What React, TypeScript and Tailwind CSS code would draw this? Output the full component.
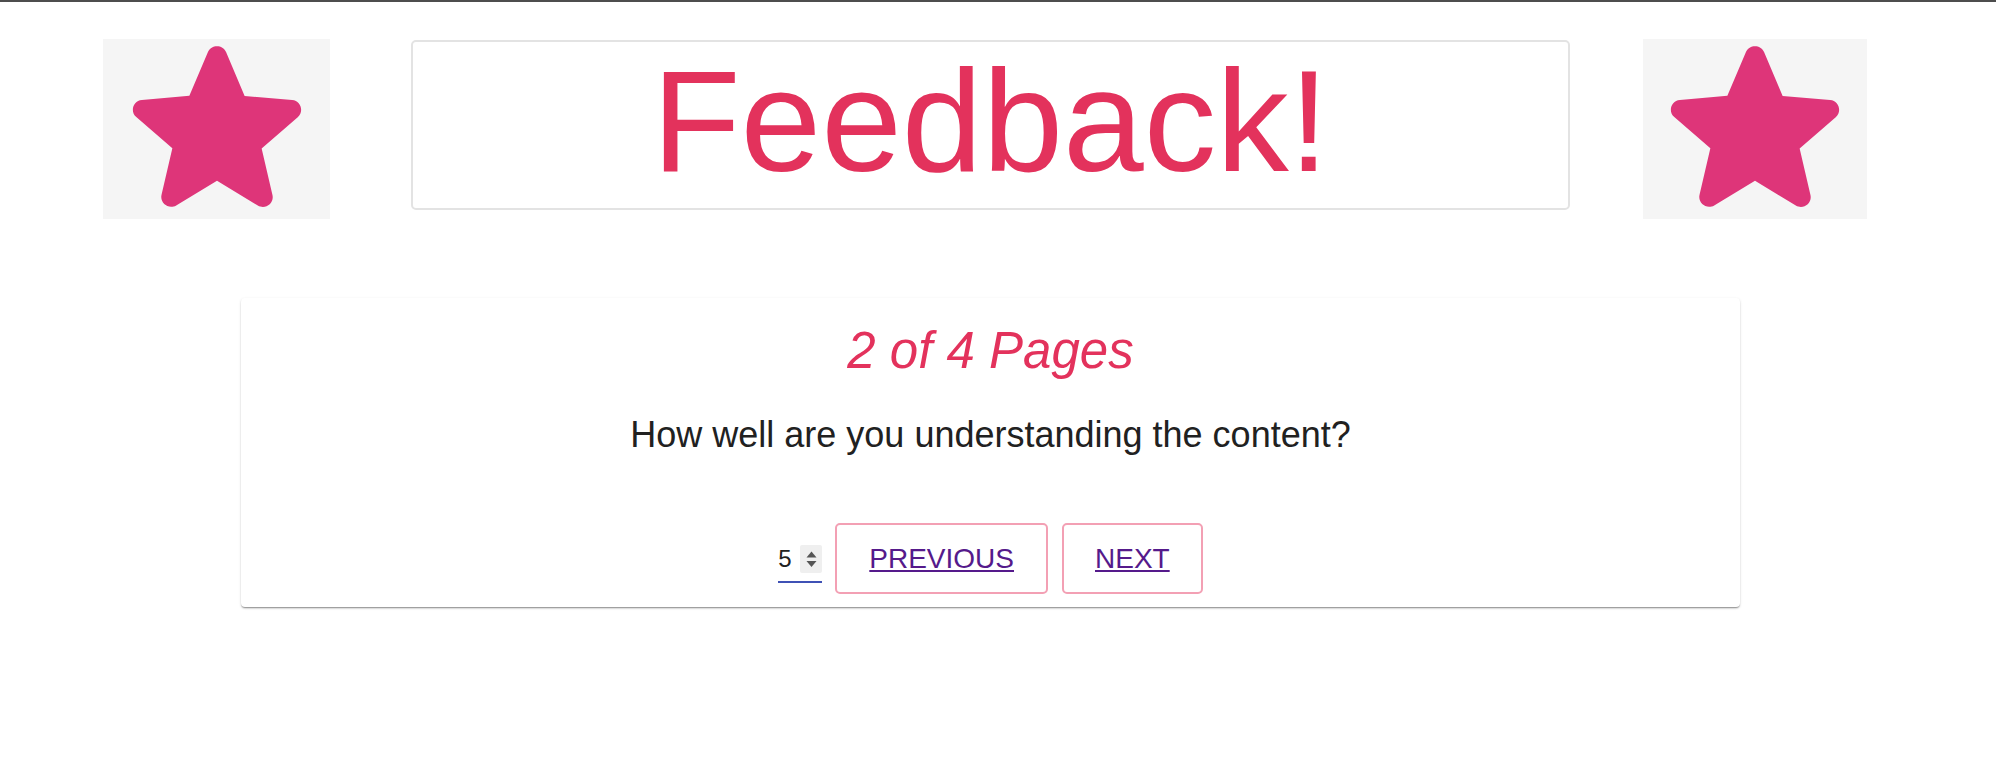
import React from "react";

const STAR_PATH =
  "M12 17.27l4.15 2.51c.76.46 1.69-.22 1.49-1.08l-1.1-4.72 3.67-3.18c.67-.58.31-1.68-.57-1.75l-4.83-.41-1.89-4.46c-.34-.81-1.5-.81-1.84 0L9.19 8.63l-4.83.41c-.88.07-1.24 1.17-.57 1.75l3.67 3.18-1.1 4.72c-.2.86.73 1.54 1.49 1.08l4.15-2.5z";

function StarBox({ width }: { width: string }) {
  return (
    <div className={`${width} h-[180px] shrink-0 bg-[#f5f5f5] flex items-center justify-center`}>
      <svg width="236" height="236" viewBox="0 0 24 24" className="shrink-0">
        <path fill="#de3579" d={STAR_PATH} />
      </svg>
    </div>
  );
}

export default function App() {
  return (
    <div className="min-h-[763px] bg-white font-['Liberation_Sans',Arial,Helvetica,sans-serif]">
      <div className="h-[2px] bg-[#4d4d4d]" />
      <div className="pr-[15px]">
        {/* Header */}
        <div className="mt-[37px] flex items-start pl-[103px]">
          <StarBox width="w-[227px]" />
          <div className="ml-[81px] mt-[1px] w-[1159px] h-[170px] shrink-0 rounded-[5px] border-2 border-[#e3e3e3] flex justify-center">
            <h1 className="pt-[7px] text-[145px] leading-[145px] text-[#e3325c] font-normal whitespace-nowrap">
              Feedback!
            </h1>
          </div>
          <div className="ml-[73px]">
            <StarBox width="w-[224px]" />
          </div>
        </div>

        {/* Card */}
        <div className="mt-[79px] mx-auto w-[1499px] rounded-[4px] bg-white shadow-[0px_2px_2px_-1px_rgba(0,0,0,0.3),0px_1px_1px_0px_rgba(0,0,0,0.14),0px_1px_3px_0px_rgba(0,0,0,0.12)] flex flex-col items-center pt-[27px] pb-[13px]">
          <h2 className="text-[51px] leading-[51px] italic text-[#e3325c] whitespace-nowrap">
            2 of 4 Pages
          </h2>
          <p className="mt-[41px] text-[36px] leading-[36px] text-[#212121] whitespace-nowrap">
            How well are you understanding the content?
          </p>
          <div className="mt-[70px] flex items-end">
            <div className="mb-[11px] flex flex-col">
              <div className="h-[28px] flex items-center">
                <span className="w-[22px] text-[24px] leading-[28px] text-[#212121]">5</span>
                <span className="w-[22px] h-[28px] rounded-[2px] bg-[#efefef] flex items-center justify-center">
                  <svg width="11" height="17" viewBox="0 0 11 17">
                    <polygon points="5.5,0.5 10.5,6.5 0.5,6.5" fill="#555555" />
                    <polygon points="0.5,10 10.5,10 5.5,16" fill="#555555" />
                  </svg>
                </span>
              </div>
              <div className="h-[8px]" />
              <div className="h-[2px] bg-[#3f51b5]" />
            </div>
            <a
              href="#"
              className="ml-[13px] h-[71px] px-[32px] rounded-[5px] border-2 border-[#f3a0b4] flex items-center text-[28px] text-[#551a8b] underline whitespace-nowrap"
            >
              PREVIOUS
            </a>
            <a
              href="#"
              className="ml-[14px] h-[71px] px-[31px] rounded-[5px] border-2 border-[#f3a0b4] flex items-center text-[28px] text-[#551a8b] underline whitespace-nowrap"
            >
              NEXT
            </a>
          </div>
        </div>
      </div>
    </div>
  );
}
